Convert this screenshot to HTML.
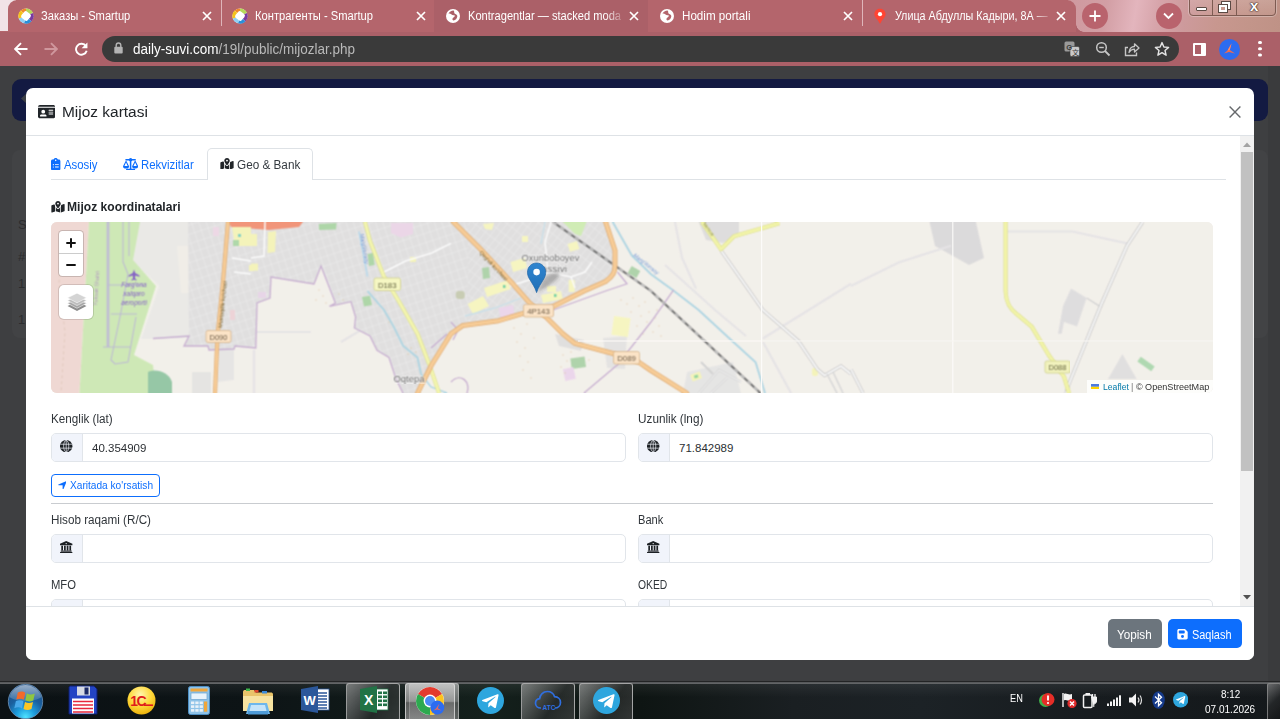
<!DOCTYPE html>
<html lang="uz">
<head>
<meta charset="utf-8">
<title>Mijoz kartasi</title>
<style>
*{box-sizing:border-box;margin:0;padding:0}
html,body{width:1280px;height:719px;overflow:hidden}
body{position:relative;background:#3e3f41;font-family:"Liberation Sans",sans-serif;color:#212529;font-size:13px}
.abs{position:absolute}
.lbl,#t_xar,#mtitle,.val,.btn span{transform-origin:0 50%}
/* ---------- browser chrome ---------- */
#chrome{position:absolute;left:0;top:0;width:1280px;height:66px;background:#ab6068}
#tabstrip{position:absolute;left:0;top:0;width:1280px;height:32px;background:#b4656c;overflow:hidden}
.tab{position:absolute;top:0;height:32px;background:#b5666e;border-radius:8px 8px 8px 8px;color:#fff;font-size:12px;line-height:32px;white-space:nowrap}
.tab .tt{position:absolute;left:33px;top:0}
.tab .x{position:absolute;top:9px;width:14px;height:14px}
.tabt{top:0;line-height:32px;font-size:12.5px;color:#fff;white-space:nowrap;transform-origin:0 50%}
.tabsep{position:absolute;top:0;width:1px;height:26px;background:#e6c9cc}
#toolbar{position:absolute;left:0;top:32px;width:1280px;height:34px;background:#ab6068}
#omni{position:absolute;left:102px;top:4px;width:1077px;height:26px;border-radius:13px;background:#3a3a3a}
#url{position:absolute;left:31px;top:0;line-height:26px;font-size:14px;color:#fff;white-space:nowrap;transform:scaleX(.964);transform-origin:0 50%}
#url span{color:#b9b9b9}
/* ---------- page ---------- */
#navy{position:absolute;left:12px;top:79px;width:1256px;height:42px;border-radius:9px;background:#131a42}
#modal{position:absolute;left:26px;top:88px;width:1228px;height:572px;background:#fff;border-radius:7px;overflow:hidden}
#mhead{position:absolute;left:0;top:0;width:100%;height:48px;border-bottom:1px solid #dee2e6}
#mtitle{position:absolute;left:36px;top:14px;transform:scaleX(.997);font-size:15.5px;color:#2b2f33;line-height:20px;color:#212529;white-space:nowrap}
#mfoot{position:absolute;left:0;top:518px;width:100%;height:54px;border-top:1px solid #dee2e6;background:#fff}
.btn{position:absolute;top:12px;height:29px;border-radius:5px;color:#fff;font-size:12.5px;line-height:29px;text-align:center;white-space:nowrap}
#mbody{position:absolute;left:0;top:48px;width:1214px;height:470px;overflow:hidden}
#sbar{position:absolute;left:1214px;top:48px;width:14px;height:470px;background:#f1f1f1}
#sthumb{position:absolute;left:1px;top:16px;width:12px;height:319px;background:#c1c1c1}
.lbl{position:absolute;font-size:12.5px;line-height:16px;color:#30353a;white-space:nowrap}
.ig{position:absolute;height:29px;border:1px solid #e1e5ea;border-radius:5px;background:#fff;overflow:hidden}
.ig .ad{position:absolute;left:0;top:0;width:31px;height:27px;background:#f1f4fb;border-right:1px solid #e1e5ea}
.ig .val{position:absolute;left:40px;top:0;line-height:28px;font-size:11.5px;color:#2b2f33;white-space:nowrap}
/* ---------- taskbar ---------- */
#taskbar{position:absolute;left:0;top:682px;width:1280px;height:37px;background:#0d1214;overflow:hidden}
</style>
</head>
<body>

<!-- ================= BROWSER CHROME ================= -->
<div id="chrome">
  <div id="tabstrip">
<div class="abs" style="left:0;top:0;width:16px;height:31px;background:#f1e3e7;border-radius:0 0 8px 0"></div>
<div class="abs" style="left:1068px;top:0;width:212px;height:32px;background:linear-gradient(100deg,#cf999f 0%,#d29ea4 18%,#e3b5bd 32%,#d7a5ab 42%,#cd9a9c 55%,#c8978f 70%,#c3958a 85%,#bf9286 100%)"></div>
<div class="abs" style="left:8px;top:0;width:428px;height:32px;background:#b4656c;border-radius:9px 0 0 0"></div>
<div class="abs" style="left:646px;top:0;width:430px;height:32px;background:#b4656c;border-radius:0 9px 0 0"></div>
<div class="abs" style="left:434px;top:0;width:214px;height:32px;background:#ab6068;border-radius:0"></div>
<div class="abs" style="left:1076px;top:24px;width:8px;height:8px;background:radial-gradient(circle at 100% 0,transparent 7.500px,#ab6068 8px)"></div>
<svg class="abs" style="left:18px;top:8px" width="16" height="16" viewBox="0 0 16 16"><circle cx="8" cy="8" r="7.600" fill="#fff"/><path d="M8 8 L2.600 2.600 A7.600 7.600 0 0 1 8 .4Z" fill="#ef8b2c"/><path d="M8 8 L8 .4 A7.600 7.600 0 0 1 15 5Z" fill="#b5d85a"/><path d="M8 8 L15 5 A7.600 7.600 0 0 1 13.400 13.400Z" fill="#7a3aa0"/><path d="M8 8 L13.400 13.400 A7.600 7.600 0 0 1 6 15.300Z" fill="#2a8fd8"/><path d="M8 8 L6 15.300 A7.600 7.600 0 0 1 .8 10.500Z" fill="#8fd0f5"/><path d="M8 8 L.8 10.500 A7.600 7.600 0 0 1 2.600 2.600Z" fill="#f5c21b"/><rect x="3.900" y="3.900" width="8.200" height="8.200" rx="2.200" fill="#fff" transform="rotate(40 8 8)"/></svg>
<div class="abs tabt" id="t_tab1" style="transform:scaleX(0.892);left:41.3px">Заказы - Smartup</div>
<svg class="abs" style="left:202px;top:11px" width="10" height="10" viewBox="0 0 10 10"><path d="M1 1L9 9M9 1L1 9" stroke="#fff" stroke-width="1.700" fill="none"/></svg>
<svg class="abs" style="left:231.5px;top:8px" width="16" height="16" viewBox="0 0 16 16"><circle cx="8" cy="8" r="7.600" fill="#fff"/><path d="M8 8 L2.600 2.600 A7.600 7.600 0 0 1 8 .4Z" fill="#ef8b2c"/><path d="M8 8 L8 .4 A7.600 7.600 0 0 1 15 5Z" fill="#b5d85a"/><path d="M8 8 L15 5 A7.600 7.600 0 0 1 13.400 13.400Z" fill="#7a3aa0"/><path d="M8 8 L13.400 13.400 A7.600 7.600 0 0 1 6 15.300Z" fill="#2a8fd8"/><path d="M8 8 L6 15.300 A7.600 7.600 0 0 1 .8 10.500Z" fill="#8fd0f5"/><path d="M8 8 L.8 10.500 A7.600 7.600 0 0 1 2.600 2.600Z" fill="#f5c21b"/><rect x="3.900" y="3.900" width="8.200" height="8.200" rx="2.200" fill="#fff" transform="rotate(40 8 8)"/></svg>
<div class="abs tabt" id="t_tab2" style="transform:scaleX(0.894);left:254.8px">Контрагенты - Smartup</div>
<svg class="abs" style="left:415.5px;top:11px" width="10" height="10" viewBox="0 0 10 10"><path d="M1 1L9 9M9 1L1 9" stroke="#fff" stroke-width="1.700" fill="none"/></svg>
<svg class="abs" style="left:445px;top:8px" width="16" height="16" viewBox="0 0 16 16"><circle cx="8" cy="8" r="7" fill="#fff"/><path fill="#ab6068" d="M8.600 2.400 C6.400 2.600 4.200 3.800 3.400 5.800 C4.400 5.400 5.400 5.600 6.200 6.300 C7 7 8 7.300 9 7.200 C9.600 7.200 10 7.800 9.600 8.400 C9 9.300 7.800 9.600 7.400 10.800 C7.200 11.600 7.800 12.400 8.600 12.400 C10.400 12.200 12 10.400 12.300 8.400 C12.400 7.600 11.800 7 11.200 6.600 C10.200 6 9.400 5.600 9.200 4.600 C9.100 3.800 9.400 3 8.600 2.400 Z"/></svg>
<div class="abs tabt" id="t_tab3" style="transform:scaleX(0.888);left:468.3px">Kontragentlar — stacked moda</div>
<svg class="abs" style="left:629px;top:11px" width="10" height="10" viewBox="0 0 10 10"><path d="M1 1L9 9M9 1L1 9" stroke="#fff" stroke-width="1.700" fill="none"/></svg>
<svg class="abs" style="left:658.5px;top:8px" width="16" height="16" viewBox="0 0 16 16"><circle cx="8" cy="8" r="7" fill="#fff"/><path fill="#b4656c" d="M8.600 2.400 C6.400 2.600 4.200 3.800 3.400 5.800 C4.400 5.400 5.400 5.600 6.200 6.300 C7 7 8 7.300 9 7.200 C9.600 7.200 10 7.800 9.600 8.400 C9 9.300 7.800 9.600 7.400 10.800 C7.200 11.600 7.800 12.400 8.600 12.400 C10.400 12.200 12 10.400 12.300 8.400 C12.400 7.600 11.800 7 11.200 6.600 C10.200 6 9.400 5.600 9.200 4.600 C9.100 3.800 9.400 3 8.600 2.400 Z"/></svg>
<div class="abs tabt" id="t_tab4" style="transform:scaleX(0.930);left:681.8px">Hodim portali</div>
<svg class="abs" style="left:842.5px;top:11px" width="10" height="10" viewBox="0 0 10 10"><path d="M1 1L9 9M9 1L1 9" stroke="#fff" stroke-width="1.700" fill="none"/></svg>
<svg class="abs" style="left:872px;top:8px" width="16" height="16" viewBox="0 0 16 16"><path fill="#f43" d="M8 .8 C4.600 .8 2.400 3.300 2.400 6.200 C2.400 9.400 6 11 7.400 15.200 H8.600 C10 11 13.600 9.400 13.600 6.200 C13.600 3.300 11.400 .8 8 .8Z"/><circle cx="8" cy="6.200" r="2.100" fill="#fff"/></svg>
<div class="abs tabt" id="t_tab5" style="transform:scaleX(0.862);left:895.3px">Улица Абдуллы Кадыри, 8А —</div>
<svg class="abs" style="left:1056px;top:11px" width="10" height="10" viewBox="0 0 10 10"><path d="M1 1L9 9M9 1L1 9" stroke="#fff" stroke-width="1.700" fill="none"/></svg>
<div class="abs" style="left:221px;top:0;width:1px;height:26px;background:#dfb5ba"></div>
<div class="abs" style="left:862px;top:0;width:1px;height:26px;background:#dfb5ba"></div>
<div class="abs" style="left:605px;top:6px;width:22px;height:20px;background:linear-gradient(90deg,rgba(171,96,104,0),#ab6068)"></div>
<div class="abs" style="left:1034px;top:6px;width:20px;height:20px;background:linear-gradient(90deg,rgba(180,101,108,0),#b4656c)"></div>
<div class="abs" style="left:1082px;top:3px;width:26px;height:26px;border-radius:13px;background:#b9636d"></div>
<svg class="abs" style="left:1089px;top:10px" width="12" height="12" viewBox="0 0 12 12"><path d="M6 0.500V11.500M0.500 6H11.500" stroke="#fff" stroke-width="1.800"/></svg>
<div class="abs" style="left:1155.500px;top:3px;width:26px;height:26px;border-radius:13px;background:#b9636d"></div>
<svg class="abs" style="left:1163px;top:12px" width="11" height="8" viewBox="0 0 11 8"><path d="M1 1.500L5.500 6L10 1.500" stroke="#fff" stroke-width="1.800" fill="none"/></svg>
<div class="abs" style="left:1189px;top:-4px;width:87px;height:20px;border:1px solid #7d5b52;border-radius:4px;background:linear-gradient(180deg,rgba(255,255,255,.16),rgba(255,255,255,.04));box-shadow:0 0 0 1px rgba(255,255,255,.28)"></div>
<div class="abs" style="left:1212px;top:0;width:1px;height:15px;background:#7d5b52"></div>
<div class="abs" style="left:1236px;top:0;width:1px;height:15px;background:#7d5b52"></div>
<div class="abs" style="left:1196px;top:7px;width:11px;height:4px;background:#fff;border:1px solid #5b4a44;border-radius:1px"></div>
<div class="abs" style="left:1222px;top:2px;width:8px;height:7px;border:2px solid #fff;outline:1px solid #5b4a44"></div><div class="abs" style="left:1219px;top:5px;width:8px;height:7px;border:2px solid #fff;outline:1px solid #5b4a44;background:#c9998f"></div>
<div class="abs" id="wclose" style="left:1250px;top:-3px;font:bold 15px/18px 'Liberation Sans',sans-serif;color:#fff;text-shadow:0 0 1px #3b2a25,0 0 1px #3b2a25,0 0 2px #3b2a25">x</div>
  </div>
  <div id="toolbar">
    <div id="omni"><svg class="abs" style="left:11.500px;top:6.200px" width="9" height="12" viewBox="0 0 9 12"><path d="M2.200 5V3.300a2.300 2.300 0 0 1 4.600 0V5" stroke="#b4b4b4" stroke-width="1.400" fill="none"/><rect x="0.300" y="4.800" width="8.400" height="6.700" rx="1" fill="#b4b4b4"/></svg><div id="url">daily-suvi.com<span>/19l/public/mijozlar.php</span></div><svg class="abs" style="left:962.0px;top:5px" width="16" height="16" viewBox="0 0 16 16"><rect x="0.500" y="0.500" width="10" height="10" rx="1.500" fill="#9a9a9a"/><rect x="6" y="5.500" width="9.500" height="10" rx="1.500" fill="#c9c9c9" stroke="#3a3a3a" stroke-width=".6"/><text x="2.200" y="8.600" font-family="Liberation Sans,sans-serif" font-size="7.500" font-weight="bold" fill="#3a3a3a">G</text><text x="8" y="13.800" font-family="Liberation Sans,Noto Sans CJK SC,sans-serif" font-size="7" fill="#3a3a3a">文</text></svg><svg class="abs" style="left:992.5px;top:5px" width="16" height="16" viewBox="0 0 16 16"><circle cx="6.500" cy="6.500" r="4.800" stroke="#c6c6c6" stroke-width="1.500" fill="none"/><path d="M10 10L14.500 14.500" stroke="#c6c6c6" stroke-width="1.800"/><path d="M4.200 6.500H8.800" stroke="#c6c6c6" stroke-width="1.400"/></svg><svg class="abs" style="left:1022.0px;top:5px" width="16" height="16" viewBox="0 0 16 16"><path d="M4 6.500H1.500V14.500H12.500V11.500" stroke="#c6c6c6" stroke-width="1.400" fill="none"/><path d="M5 11.500C5.500 7.500 8 5.500 10.500 5.500V2.800L15 7L10.500 11V8.200C8.500 8.200 6.500 9 5 11.500Z" stroke="#c6c6c6" stroke-width="1.300" fill="none" stroke-linejoin="round"/></svg><svg class="abs" style="left:1052.0px;top:4.500px" width="16" height="16" viewBox="0 0 16 16"><path d="M8 1.600L9.900 6L14.600 6.400L11 9.500L12.100 14.200L8 11.700L3.900 14.200L5 9.500L1.400 6.400L6.100 6Z" stroke="#e4e4e4" stroke-width="1.400" fill="none" stroke-linejoin="round"/></svg></div>
<svg class="abs" style="left:13.6px;top:9.700px" width="14" height="14" viewBox="0 0 14 14"><path d="M13.500 7H1.500M7 1.200L1.200 7L7 12.800" stroke="#fff" stroke-width="1.900" fill="none"/></svg>
<svg class="abs" style="left:43.5px;top:9.700px" width="14" height="14" viewBox="0 0 14 14"><path transform="translate(14 0) scale(-1 1)" d="M13.500 7H1.500M7 1.200L1.200 7L7 12.800" stroke="#cf979d" stroke-width="1.900" fill="none"/></svg>
<svg class="abs" style="left:73.500px;top:9.500px" width="14.500" height="14.500" viewBox="0 0 16 16"><path d="M13.200 4.600 A6 6 0 1 0 14 9.600" stroke="#fff" stroke-width="2.100" fill="none"/><path d="M14.800 0.600V7H8.400Z" fill="#fff"/></svg>
  <div class="abs" style="left:1193px;top:10.500px;width:13px;height:13px;border:2px solid #fff;border-radius:1px"><div class="abs" style="right:0;top:0;width:3.500px;height:9px;background:#fff"></div></div>
<div class="abs" style="left:1219px;top:7px;width:21px;height:21px;border-radius:11px;background:#2d6cf0"></div>
<svg class="abs" style="left:1222px;top:10px" width="15" height="15" viewBox="0 0 15 15"><path d="M9.500 1.500L7.800 8L13 11.500L7 10L2 11.500L5.500 8.500Z" fill="#f26b4e"/><path d="M9.500 1.500L7.800 8L5.500 8.500Z" fill="#ff8a6b"/></svg>
<div class="abs" style="left:1258.300px;top:8.500px;width:3.400px;height:3.400px;border-radius:2px;background:#fff;box-shadow:0 6.300px 0 #fff,0 12.600px 0 #fff"></div>
  </div>
</div>

<!-- ================= PAGE ================= -->
<div class="abs" style="left:12px;top:150px;width:1256px;height:188px;border-radius:8px;background:#424345"></div>
<div class="abs" style="left:1268px;top:66px;width:12px;height:616px;background:#3a3b3d"></div>
<div id="navy"></div>
<svg class="abs" style="left:20px;top:93px" width="7" height="11" viewBox="0 0 7 11"><path d="M7 0L1 5.500L7 11Z" fill="#3c3f45"/></svg>
<div class="abs" style="left:18px;top:217px;font-size:13px;line-height:16px;color:#2c2d2f">S<br><br>#<br><span style="display:block;height:11px"></span>1<br><span style="display:block;height:20px"></span>1</div>
<div id="modal">
  <div id="mhead"><svg class="abs" style="left:12.299999999999997px;top:15.599999999999994px" width="17.2" height="15.3" viewBox="0 0 576 512"><path fill="#212529" fill-rule="evenodd" d="M0 96h576c0-35.300-28.700-64-64-64H64C28.700 32 0 60.700 0 96zm0 32v288c0 35.300 28.700 64 64 64h448c35.300 0 64-28.700 64-64V128H0zM64 405.300c0-29.500 23.900-53.300 53.300-53.300h117.300c29.500 0 53.300 23.900 53.300 53.300 0 5.900-4.800 10.700-10.700 10.700H74.700c-5.900 0-10.700-4.800-10.700-10.700zM176 192a64 64 0 1 1 0 128 64 64 0 1 1 0-128zm176 16c0-8.800 7.200-16 16-16h128c8.800 0 16 7.200 16 16s-7.200 16-16 16H368c-8.800 0-16-7.200-16-16zm0 64c0-8.800 7.200-16 16-16h128c8.800 0 16 7.200 16 16s-7.200 16-16 16H368c-8.800 0-16-7.200-16-16zm0 64c0-8.800 7.200-16 16-16h128c8.800 0 16 7.200 16 16s-7.200 16-16 16H368c-8.800 0-16-7.200-16-16z"/></svg><div id="mtitle">Mijoz kartasi</div><svg class="abs" style="left:1203.400px;top:17.600px" width="12" height="12" viewBox="0 0 12 12"><path d="M.6 .6L11.400 11.400M11.400 .6L.6 11.400" stroke="#66696c" stroke-width="1.400" fill="none"/></svg></div>
  <div id="mbody">
    <!-- tabs -->
    <div class="abs" style="left:25px;top:43px;width:1175px;height:1px;background:#dee2e6"></div>
    <div class="abs" style="left:181px;top:12px;width:106px;height:32px;border:1px solid #dee2e6;border-bottom:none;border-radius:5px 5px 0 0;background:#fff"></div>
<svg class="abs" style="left:25.299999999999997px;top:21.5px" width="9.4" height="12.5" viewBox="0 0 384 512"><path fill="#0d6efd" fill-rule="evenodd" d="M192 0c-41.800 0-77.400 26.700-90.500 64H64C28.700 64 0 92.700 0 128v320c0 35.300 28.700 64 64 64h256c35.300 0 64-28.700 64-64V128c0-35.300-28.700-64-64-64h-37.500C269.400 26.700 233.800 0 192 0zm0 64a32 32 0 1 1 0 64 32 32 0 1 1 0-64zM72 272a24 24 0 1 1 48 0 24 24 0 1 1-48 0zm104-16h128c8.800 0 16 7.200 16 16s-7.200 16-16 16H176c-8.800 0-16-7.200-16-16s7.200-16 16-16zM72 368a24 24 0 1 1 48 0 24 24 0 1 1-48 0zm88 0c0-8.800 7.200-16 16-16h128c8.800 0 16 7.200 16 16s-7.200 16-16 16H176c-8.800 0-16-7.200-16-16z"/></svg>
<svg class="abs" style="left:97px;top:21.69999999999999px" width="15.2" height="12.3" viewBox="0 0 640 512"><g fill="#0d6efd"><rect x="96" y="40" width="448" height="64" rx="30"/><circle cx="320" cy="72" r="72"/><rect x="288" y="72" width="64" height="400"/><rect x="128" y="448" width="384" height="64" rx="30"/><path fill-rule="evenodd" d="M128 90 L0 340 a128 100 0 0 0 256 0 Z M128 190 L60 330 H196 Z"/><path fill-rule="evenodd" d="M512 90 L384 340 a128 100 0 0 0 256 0 Z M512 190 L444 330 H580 Z"/></g></svg>
<svg class="abs" style="left:194px;top:21.69999999999999px" width="14" height="11.8" viewBox="0 0 576 512"><path fill="#212529" fill-rule="evenodd" d="M408 120c0 54.600-73.100 151.900-105.200 192-7.700 9.600-22 9.600-29.600 0C241.100 271.900 168 174.600 168 120 168 53.700 221.700 0 288 0s120 53.700 120 120zm8 80.400c3.500-6.900 6.700-13.800 9.600-20.600.5-1.200 1-2.500 1.500-3.700l116-46.400C558.900 123.400 576 135 576 152v270.800c0 9.800-6 18.600-15.100 22.300L416 503V200.400zM137.600 138.300c2.400 14.100 7.200 28.300 12.800 41.500 2.900 6.800 6.100 13.700 9.600 20.600v251.400L32.900 502.700C17.100 509 0 497.400 0 480.400V209.600c0-9.800 6-18.600 15.100-22.300l122.600-49zM327.800 332c13.900-17.400 35.700-45.700 56.200-77v249.300L192 449.400V255c20.500 31.300 42.300 59.600 56.200 77 20.500 25.600 59.100 25.600 79.600 0zM288 152a40 40 0 1 0 0-80 40 40 0 1 0 0 80z"/></svg>
<svg class="abs" style="left:24.6px;top:64.80000000000001px" width="14" height="11.8" viewBox="0 0 576 512"><path fill="#212529" fill-rule="evenodd" d="M408 120c0 54.600-73.100 151.900-105.200 192-7.700 9.600-22 9.600-29.600 0C241.100 271.900 168 174.600 168 120 168 53.700 221.700 0 288 0s120 53.700 120 120zm8 80.400c3.500-6.900 6.700-13.800 9.600-20.600.5-1.200 1-2.500 1.500-3.700l116-46.400C558.900 123.400 576 135 576 152v270.800c0 9.800-6 18.600-15.100 22.300L416 503V200.400zM137.600 138.300c2.400 14.100 7.200 28.300 12.800 41.500 2.900 6.800 6.100 13.700 9.600 20.600v251.400L32.900 502.700C17.100 509 0 497.400 0 480.400V209.600c0-9.800 6-18.600 15.100-22.300l122.600-49zM327.800 332c13.900-17.400 35.700-45.700 56.200-77v249.300L192 449.400V255c20.500 31.300 42.300 59.600 56.200 77 20.500 25.600 59.100 25.600 79.600 0zM288 152a40 40 0 1 0 0-80 40 40 0 1 0 0 80z"/></svg>
    <div class="lbl t13" id="t_asosiy" style="transform:scaleX(0.910);left:38px;top:21px;color:#0d6efd">Asosiy</div>
    <div class="lbl t13" id="t_rekv" style="transform:scaleX(0.914);left:115px;top:21px;color:#0d6efd">Rekvizitlar</div>
    <div class="lbl t13" id="t_geo" style="transform:scaleX(0.939);left:211px;top:21px;color:#343a40">Geo &amp; Bank</div>
    <div class="lbl" id="t_coord" style="transform:scaleX(0.967);left:41px;top:63px;font-weight:bold;color:#212529">Mijoz koordinatalari</div>

    <!-- map -->
    <div id="map" class="abs" style="left:25px;top:86px;width:1162px;height:171px;border-radius:6px;background:#f2efe9;overflow:hidden">
<svg class="abs" style="left:0;top:0" width="1162" height="171" viewBox="0 0 1162 171">
<defs>
<filter id="mb" x="0" y="0" width="100%" height="100%" color-interpolation-filters="sRGB"><feConvolveMatrix order="3" kernelMatrix="1 2 1 2 4 2 1 2 1" divisor="16" edgeMode="duplicate" preserveAlpha="false"/></filter>
<filter id="mb2" x="-5%" y="-20%" width="110%" height="140%"><feGaussianBlur stdDeviation="0.55"/></filter><filter id="mb3" x="0" y="0" width="100%" height="100%" color-interpolation-filters="sRGB"><feConvolveMatrix order="3" kernelMatrix="1 2 1 2 4 2 1 2 1" divisor="16" edgeMode="duplicate" preserveAlpha="false"/></filter>
<pattern id="st1" width="7" height="9" patternUnits="userSpaceOnUse" patternTransform="rotate(-18)"><path d="M0 .5H7M.5 0V9" stroke="#fff" stroke-opacity=".3" stroke-width=".7"/></pattern>
<pattern id="st2" width="6" height="10" patternUnits="userSpaceOnUse" patternTransform="rotate(38)"><path d="M0 .5H6M.5 0V10" stroke="#fff" stroke-opacity=".28" stroke-width=".7"/></pattern>
<clipPath id="cgrey"><path d="M137 0H554.600L564 28.500V47.600L554.600 59.500L533 69L500 85.600L471.300 91.600L447.600 98.700L412 103.400L400 111.800L380.700 142.700L366.500 171H352L345 157L338 135.500L326 128.400L319 114L303.400 106L304.600 95L300 79.700L278.500 84.400L284.400 81L270 44L263 62L220 55L219 76L206 81L204.800 126L184 124L183 127L158 128L157 124L133 124L138 114Z"/></clipPath>
</defs>
<rect width="1162" height="171" fill="#f2efe9"/>
<g filter="url(#mb)">
<!-- light grey zone next to the airport -->
<path d="M80 0H140V116L100 117L90 117L108 64L80 38Z" fill="#e9e8e5"/>
<path d="M126 24H140V71H130Z" fill="#efece6"/>
<!-- main residential grey -->
<path d="M137 0H554.600L564 28.500V47.600L554.600 59.500L533 69L500 85.600L471.300 91.600L447.600 98.700L412 103.400L400 111.800L380.700 142.700L366.500 171H352L345 157L338 135.500L326 128.400L319 114L303.400 106L304.600 95L300 79.700L278.500 84.400L284.400 81L270 44L263 62L220 55L219 76L206 81L204.800 126L184 124L183 127L158 128L157 124L133 124L138 114Z" fill="#dedddd"/>
<path d="M168 127H183V158L167 160Z" fill="#e5e4e2"/>
<g clip-path="url(#cgrey)"><rect x="137" y="0" width="280" height="171" fill="url(#st1)"/><rect x="417" y="0" width="150" height="120" fill="url(#st2)"/></g>
<!-- small grey blocks outside -->
<path d="M504 112L533 118L530 129L508 124Z" fill="#dedddc"/>
<path d="M552 116L576 114L574 147L556 146Z" fill="#e2e1e0"/>
<path d="M647.600 0H688V14L672 21L655 18Z" fill="#dcdbdb"/>
<path d="M636 150L682 140L690 171H632Z" fill="#e4e3e2"/>
<path d="M878.500 0H925L933 36L918 43L884 24Z" fill="#d9d8d9"/>
<path d="M1020 66.600L1035.700 76L1026 104.600L1013 100L1010.700 111.800L1007 111.800L1012 84Z" fill="#dcdbdc"/>
<path d="M1071.400 132L1085.700 157H1057Z" fill="#dedddd"/>
<path d="M141 150H160V171H141Z" fill="#e3e2e0"/>
<!-- airport -->
<path d="M0 0H38L28.500 171H0Z" fill="#eed6d0"/>
<path d="M38 0H89L82 38L105 64L83 133L102 143L105 171H28.500Z" fill="#cbe7b1"/>
<path d="M97 150C105 146 118 150 121 160V171H97Z" fill="#8fc3a0"/>
<path d="M57 0V125" stroke="#bbb8d0" stroke-width="2.800" fill="none"/>
<path d="M72 0V40L77 52L70 90L60 138L64 142L77 140L85 95M52 125H80M57 63H92M60 92H86M78 0V34" stroke="#b8b5d0" stroke-width="1.100" fill="none"/>
<path d="M13 10L8 60L14 110L10 171" stroke="#dcc0b4" stroke-width=".8" stroke-dasharray="3 3" fill="none"/>
<!-- salmon / yellow / green / pink patches -->
<path d="M178 0H252L248 5L218 8L180 5Z" fill="#f08d70"/>
<path d="M181 5H200V24H184Z" fill="#f4f3b5"/><rect x="187" y="12" width="3" height="3" fill="#7ecfc0"/>
<rect x="200" y="12" width="6" height="12" fill="#f4f3b5"/><path d="M217 10L225 9L224 30L216.600 31Z" fill="#f4f3b5"/><rect x="200" y="41.600" width="7" height="7" fill="#f4f3b5"/>
<rect x="198" y="43" width="5" height="6" fill="#f4f3b5"/>
<rect x="162" y="5" width="6" height="9" fill="#ecd6e4"/><rect x="179" y="88" width="5" height="10" fill="#ecd0d4"/><rect x="207" y="70" width="8" height="6" fill="#e6d2e6"/>
<rect x="182" y="18" width="6" height="6" fill="#a9d6a4"/>
<path d="M267.800 2L285.600 1L285 7.500L268 8Z" fill="#a8d3a2"/><path d="M316.500 32L322 31L323.700 43L318 44Z" fill="#a8d3a2"/><path d="M311 75L319 73.700L321 83L313 84.400Z" fill="#a8d3a2"/>
<path d="M340 1H362V12L350 15.500L340 11Z" fill="#ead3e6"/><rect x="359" y="35" width="6" height="5" fill="#f4f3b5"/>
<path d="M433 66L457 58L459.500 67L436 75Z" fill="#f6f5bd"/><path d="M416.600 82L432 74L438 84L422 92Z" fill="#f6f5bd"/><path d="M459.500 40L474 35.700L476 46L462 50Z" fill="#f6f5bd"/><path d="M490 73L510 69L511.800 77L492 81Z" fill="#f6f5bd"/><path d="M516.500 22L526 19L528.400 27L519 29.700Z" fill="#f6f5bd"/><rect x="561.700" y="95" width="16.700" height="19" fill="#f6f5bd" transform="rotate(8 570 104)"/><rect x="471" y="14" width="6" height="6" fill="#f6f5bd"/><path d="M432 2L443 1L441 8L434 7Z" fill="#f6f5bd"/><rect x="517.700" y="58" width="6" height="12" fill="#f6f5bd"/><rect x="496" y="64" width="9" height="6" fill="#f6f5bd"/>
<rect x="452" y="63" width="2.500" height="3" fill="#6fcf9f"/><rect x="503" y="72" width="2.500" height="3" fill="#6fcf9f"/>
<path d="M431 46L438 45L439 56L432 57Z" fill="#a9d0a5"/><rect x="520" y="135.500" width="14.400" height="10.500" fill="#a9d0a5" transform="rotate(-8 527 141)"/><rect x="404.800" y="69" width="9" height="8" rx="3" fill="#c4c9ae"/><rect x="578" y="46" width="10" height="8" fill="#a9d0a5" transform="rotate(30 583 50)"/>
<path d="M447.600 86L462 83L464 94L450 97.500Z" fill="#ead3ea"/><rect x="513" y="146" width="10.700" height="12" fill="#ead3ea" transform="rotate(-12 518 152)"/>
<path d="M511.800 0H535.500L530 14L524 12Z" fill="#cdebb0"/>
<rect x="640" y="151" width="10" height="7" fill="#f4f3b5" transform="rotate(-20 645 154)"/><rect x="643" y="153" width="4" height="3" fill="#8fd39a" transform="rotate(-20 645 154)"/><rect x="761" y="146" width="6" height="8" rx="2" fill="#f4f3b5"/>
<rect x="1086.500" y="139" width="17" height="6" fill="#a9d6ac" transform="rotate(35 1095 142)"/>
<!-- orchard dots -->
<g fill="#dcc59a" fill-opacity=".8"><circle cx="268" cy="68" r=".7"/><circle cx="272" cy="74" r=".7"/><circle cx="265" cy="78" r=".7"/><circle cx="275" cy="81" r=".7"/><circle cx="288" cy="72" r=".7"/><circle cx="292" cy="78" r=".7"/><circle cx="338" cy="100" r=".7"/><circle cx="360" cy="126" r=".7"/><circle cx="365" cy="130" r=".7"/><circle cx="357" cy="132" r=".7"/>
<circle cx="463" cy="106" r=".7"/><circle cx="470" cy="112" r=".7"/><circle cx="466" cy="120" r=".7"/><circle cx="474" cy="126" r=".7"/><circle cx="469" cy="134" r=".7"/><circle cx="477" cy="140" r=".7"/><circle cx="472" cy="148" r=".7"/><circle cx="480" cy="156" r=".7"/><circle cx="476" cy="102" r=".7"/><circle cx="483" cy="116" r=".7"/>
<circle cx="512" cy="133" r=".7"/><circle cx="516" cy="139" r=".7"/><circle cx="510" cy="145" r=".7"/><circle cx="514" cy="151" r=".7"/><circle cx="520" cy="130" r=".7"/><circle cx="538" cy="138" r=".7"/>
<circle cx="570" cy="78" r=".7"/><circle cx="576" cy="82" r=".7"/><circle cx="582" cy="76" r=".7"/><circle cx="588" cy="84" r=".7"/><circle cx="594" cy="80" r=".7"/><circle cx="580" cy="90" r=".7"/><circle cx="590" cy="94" r=".7"/><circle cx="596" cy="100" r=".7"/><circle cx="586" cy="104" r=".7"/><circle cx="592" cy="112" r=".7"/><circle cx="598" cy="90" r=".7"/><circle cx="604" cy="96" r=".7"/><circle cx="608" cy="104" r=".7"/><circle cx="602" cy="110" r=".7"/><circle cx="610" cy="114" r=".7"/><circle cx="606" cy="88" r=".7"/></g>
<!-- faint tracks -->
<g fill="none" stroke="#e3e1e3" stroke-width="2.200"><path d="M624 0L631 35.700L645 66.600"/><path d="M614 43L643 69L664 88L695 114"/><path d="M800 61.800L711.800 116.500"/><path d="M900 23.800L847.600 40.400L800 64"/><path d="M954.600 9.500L1021.500 9.500L1076 21.400"/><path d="M203 128V171"/><path d="M205 110H260M290 120L310 108"/><path d="M712 120L740 171"/></g>
<!-- water -->
<g fill="none" stroke="#a9d2e0" stroke-width="1.900"><path d="M308 9.500L312 30L316.500 54.700" stroke="#b8d8ea"/><path d="M316.500 69L333 88L342.700 104.600L352 123.700L366.500 135.500L370 152"/><path d="M561.700 0L580.700 33.300L600 52.300L621.400 67.800L647.600 88L678.500 116.500L704.600 140.300L714 171"/><path d="M370 152L380 165L396 171" stroke-width="1.400"/><path d="M414 94L444 86L470 76" stroke="#c4dde8" stroke-width="1.300"/><path d="M494 0L490 22" stroke="#c4dde8" stroke-width="1.300"/></g>
<!-- boundary / power lines (purple) -->
<g fill="none" stroke="#c3a9cd" stroke-width="1.300"><path d="M102 116.500L138 114L133 124L157 124L158 128L183 127L184 124L204.800 126L206 81L219 76L220 55L263 62L270 44L284.400 81L278.500 84.400L300 79.700L304.600 95L303.400 106L319 114L326 128.400L338 135.500L345 157L352 171"/><path d="M502 88L554.600 69L576 61.800L566.500 50"/><path d="M622.600 67.800L600 100L566.500 142.700L533 171"/><path d="M400 100L407 108L402 118"/><path d="M400 160C410 150 420 160 416 171"/><path d="M380 126L396 112"/></g>
<!-- white minor roads -->
<g fill="none" stroke="#fbfbfb" stroke-width="1.500"><path d="M400 21.400L380.700 31L354.600 39L333 50"/><path d="M214 0L213 34L200 36"/><path d="M181 36L200 39M183 50L200 52"/><path d="M459 64L478 58L497 50L520 55L534 50L541 40"/><path d="M520 55L524 66"/><path d="M500 0L494 20L497 50"/></g>
<!-- railway -->
<path d="M502 0L600 69L709.400 171" stroke="#666" stroke-width="2.100" fill="none"/>
<path d="M502 0L600 69L709.400 171" stroke="#dcdcdc" stroke-width="1.100" stroke-dasharray="4.500 4.500" fill="none"/>
<!-- grey-cased white roads -->
<g fill="none"><path d="M670 28.500L711.800 88L747.400 119L766.500 147.400L773.600 153.400L790 144L800 152" stroke="#c4c4c4" stroke-width="3.400"/><path d="M670 28.500L711.800 88L747.400 119L766.500 147.400L773.600 153.400L790 144L800 152" stroke="#fafafa" stroke-width="1.700"/>
<path d="M1091.600 0L1076 23.800L1050 83L1018 161.700L1015 171" stroke="#c4c4c4" stroke-width="3.400"/><path d="M1091.600 0L1076 23.800L1050 83L1018 161.700L1015 171" stroke="#fafafa" stroke-width="1.700"/>
<path d="M800 147.400L812 171" stroke="#c4c4c4" stroke-width="3.200"/><path d="M800 147.400L812 171" stroke="#fafafa" stroke-width="1.600"/>
<path d="M1035.700 76L1048.800 84.400" stroke="#cfcfcf" stroke-width="1.300"/>
<path d="M648 171L668 148L690 160M660 171L676 156M650 140L662 152" stroke="#d0d0d0" stroke-width="2.200"/><path d="M648 171L668 148L690 160M660 171L676 156" stroke="#f6f6f6" stroke-width="1"/>
<path d="M776 152L786 171M782 150L792 171" stroke="#d4d4d4" stroke-width="1.600"/>
</g>
<!-- yellow roads -->
<g fill="none" stroke-linejoin="round"><path d="M314 0L319 19L333 54.700L347.400 78.500L366.500 111.800L378.400 142.700L388 171" stroke="#d9dc84" stroke-width="4"/><path d="M314 0L319 19L333 54.700L347.400 78.500L366.500 111.800L378.400 142.700L388 171" stroke="#f3f5a9" stroke-width="2.800"/>
<path d="M651 0L670 27.300L683 14.300L728.400 1.200" stroke="#d9dc84" stroke-width="4.200"/><path d="M651 0L670 27.300L683 14.300L728.400 1.200" stroke="#f0f3a2" stroke-width="3"/>
<path d="M954.600 0V69C955 82 960 88 966.500 92.700L980.700 104.600L997.700 133L1013 154.600L1018 171" stroke="#d9dc84" stroke-width="4.200"/><path d="M954.600 0V69C955 82 960 88 966.500 92.700L980.700 104.600L997.700 133L1013 154.600L1018 171" stroke="#f0f3a2" stroke-width="3"/></g>
<!-- orange roads -->
<g fill="none" stroke-linejoin="round" stroke-linecap="round"><path d="M177 0L172 60L166.500 114L164 171" stroke="#dca66a" stroke-width="4.200"/><path d="M177 0L172 60L166.500 114L164 171" stroke="#f6c88e" stroke-width="2.800"/>
<path d="M366.500 171L380.700 142.700L400 111.800L412 103.400L447.600 98.700L471.300 91.600L500 85.600L533 69L554.600 59.500C562 54 564 50 564 44V28.500L554.600 0" stroke="#dca66a" stroke-width="5"/>
<path d="M402.400 0L428.500 26L461.800 61.800L478.500 80.900L495 95L511.800 111.800L523.700 121.300L564 132L587.900 140.300L600 148.600L635.700 171" stroke="#dca66a" stroke-width="5"/>
<path d="M366.500 171L380.700 142.700L400 111.800L412 103.400L447.600 98.700L471.300 91.600L500 85.600L533 69L554.600 59.500C562 54 564 50 564 44V28.500L554.600 0" stroke="#f6c88e" stroke-width="3.500"/>
<path d="M402.400 0L428.500 26L461.800 61.800L478.500 80.900L495 95L511.800 111.800L523.700 121.300L564 132L587.900 140.300L600 148.600L635.700 171" stroke="#f6c88e" stroke-width="3.500"/>
</g>
<!-- tile seams -->
<rect width="1162" height="171" fill="#fff" fill-opacity=".07"/>
</g>
<g filter="url(#mb2)"><path d="M710.600 0V171M901.800 0V171" stroke="#fdfcfa" stroke-width="1.100"/><path d="M527 119H710.600" stroke="#fdfcfa" stroke-width="1.100"/><path d="M710.600 119H1162" stroke="#f8f6f2" stroke-width="1"/></g>
<!-- labels -->
<g filter="url(#mb3)" filterUnits="userSpaceOnUse" font-family="Liberation Sans, sans-serif">
<g font-size="6.500" font-style="italic" fill="#8461c4" text-anchor="middle"><text x="83" y="65">Farg'ona</text><text x="83" y="74">xalqaro</text><text x="83" y="83">aeroporti</text></g>
<path d="M83 47.500L84.200 51L88.500 53.500V54.700L84.200 53.600L84 56.500L85.500 57.600V58.400L83 57.800L80.500 58.400V57.600L82 56.500L81.800 53.600L77.500 54.700V53.500L81.800 51Z" fill="#8461c4"/>
<text x="46" y="84" font-size="5.500" fill="#b49ac0" transform="rotate(-86 46 84)">Yuksak Shahri</text>
<text x="171" y="106" font-size="5.500" fill="#7d6a3a" transform="rotate(-84 171 106)">Mustaqillik ko'chasi</text>
<text x="428" y="31" font-size="5.500" fill="#7d6a3a" transform="rotate(47 428 31)">Qirgʻuli koʻchasi</text>
<text x="309" y="12" font-size="5.500" fill="#6d94d6" font-style="italic" transform="rotate(80 309 12)">Marg'ilonsoy</text>
<text x="582" y="34" font-size="5.500" fill="#6d94d6" font-style="italic" transform="rotate(38 582 34)">Marg'ilonsoy</text>
<text x="652" y="2" font-size="4.500" fill="#8a8a55" transform="rotate(56 652 2)">Mehrob</text>
<rect x="155" y="108.500" width="25" height="12" rx="2" fill="#fbe3c6" stroke="#d6b48c" stroke-width=".8"/><text x="167.500" y="117.800" font-size="7.500" fill="#6b5a45" text-anchor="middle">D090</text>
<rect x="323" y="56" width="26.500" height="12.500" rx="2" fill="#f6f7c3" stroke="#cfd08a" stroke-width=".8"/><text x="336.200" y="65.500" font-size="7.800" fill="#5f5f3c" text-anchor="middle">D183</text>
<rect x="472.500" y="82.500" width="30" height="12.500" rx="2" fill="#fbe3c6" stroke="#d6b48c" stroke-width=".8"/><text x="487.500" y="92" font-size="7.800" fill="#6b5a45" text-anchor="middle">4P143</text>
<rect x="562.500" y="129.500" width="26" height="12.500" rx="2" fill="#fbe3c6" stroke="#d6b48c" stroke-width=".8"/><text x="575.500" y="139" font-size="7.800" fill="#6b5a45" text-anchor="middle">D089</text>
<rect x="994" y="139" width="25" height="12" rx="2" fill="#f1f2bd" stroke="#cfd08a" stroke-width=".8"/><text x="1006.500" y="148.200" font-size="7.500" fill="#66663f" text-anchor="middle">D088</text>
<g font-size="9.500" fill="#6a6a6a" stroke="#ffffff" stroke-opacity=".55" stroke-width="1.600" paint-order="stroke" text-anchor="middle"><text x="499.500" y="38.500" textLength="58" lengthAdjust="spacingAndGlyphs">Oxunboboyev</text><text x="499" y="50" textLength="34" lengthAdjust="spacingAndGlyphs">massivi</text><text x="358" y="159.500" font-size="9" textLength="31" lengthAdjust="spacingAndGlyphs">Oqtepa</text></g>
</g>
</svg>

<!-- marker shadow + marker (map-local coords; map origin at page 51,222) -->
<svg class="abs" style="left:470px;top:36px" width="50" height="40" viewBox="0 0 50 40"><defs><filter id="shb" x="-30%" y="-30%" width="160%" height="160%"><feGaussianBlur stdDeviation="1.600"/></filter><linearGradient id="mk" x1="0" y1="0" x2="0" y2="1"><stop offset="0" stop-color="#3085d0"/><stop offset="1" stop-color="#216fb6"/></linearGradient><filter id="mkb"><feGaussianBlur stdDeviation=".35"/></filter></defs>
<path d="M16 34L22 22C26 16 34 13 38 15C40 18 34 24 24 30Z" fill="#4a4a4a" fill-opacity=".34" filter="url(#shb)"/>
<path filter="url(#mkb)" d="M15.600 34.600C14 29 11 25.500 8.500 21C7 18.500 6.500 16.500 6.500 14.200C6.500 9 10.500 5 15.600 5C20.700 5 24.700 9 24.700 14.200C24.700 16.500 24.200 18.500 22.700 21C20.200 25.500 17.200 29 15.600 34.600Z" fill="url(#mk)" stroke="#1f66a8" stroke-width=".7"/>
<circle cx="15.600" cy="14.100" r="3.300" fill="#fff" filter="url(#mkb)"/></svg>
<!-- zoom control -->
<div class="abs" style="left:8.300px;top:9.300px;width:23.400px;height:44.800px;background:#fff;border-radius:3.500px;box-shadow:0 0 0 1px rgba(0,0,0,.16)"></div>
<div class="abs" style="left:8.300px;top:31.200px;width:23.400px;height:1px;background:#ccc"></div>
<svg class="abs" style="left:15px;top:15.600px" width="10" height="10" viewBox="0 0 10 10"><path d="M5 .3V9.700M.3 5H9.700" stroke="#111" stroke-width="2"/></svg>
<svg class="abs" style="left:15px;top:37.800px" width="10" height="10" viewBox="0 0 10 10"><path d="M.3 5H9.700" stroke="#111" stroke-width="2"/></svg>
<!-- layers control -->
<div class="abs" style="left:8.300px;top:63px;width:33.800px;height:33.600px;background:#fff;border-radius:5px;box-shadow:0 0 0 1px rgba(0,0,0,.12)"></div>
<svg class="abs" style="left:14.500px;top:70px" width="22" height="21" viewBox="0 0 22 21"><path d="M11 9.500L1.500 14L11 19L20.500 14Z" fill="#8d8d8d"/><path d="M11 6.800L1.500 11.300L11 16.300L20.500 11.300Z" fill="#a6a6a6" stroke="#fff" stroke-width=".5"/><path d="M11 4.100L1.500 8.600L11 13.600L20.500 8.600Z" fill="#bdbdbd" stroke="#fff" stroke-width=".5"/><path d="M11 1.200L1.500 5.800L11 10.800L20.500 5.800Z" fill="#d4d4d4" stroke="#fff" stroke-width=".5"/></svg>
<!-- attribution -->
<div class="abs" style="left:1035.900px;top:157.500px;width:127px;height:14px;background:rgba(255,255,255,.82)"></div>
<svg class="abs" style="left:1040px;top:161.500px" width="8.400" height="5.600" viewBox="0 0 12 8"><rect width="12" height="4" fill="#4c7be1"/><rect y="4" width="12" height="4" fill="#ffd500"/></svg>
<div class="abs" id="t_leaf" style="transform:scaleX(0.908);left:1051.500px;top:158px;font-size:9.500px;line-height:13px;color:#0078a8;white-space:nowrap;transform-origin:0 50%">Leaflet</div>
<div class="abs" id="t_osm" style="transform:scaleX(0.957);left:1079.500px;top:158px;font-size:9.500px;line-height:13px;color:#333;white-space:nowrap;transform-origin:0 50%"><span style="color:#777">|</span> © OpenStreetMap</div>

</div><!--/map-->

    <!-- coordinates -->
    <div class="lbl" id="t_lat" style="transform:scaleX(0.935);left:25px;top:275px">Kenglik (lat)</div>
    <div class="lbl" id="t_lng" style="transform:scaleX(0.941);left:612px;top:275px">Uzunlik (lng)</div>
    <div class="ig" style="left:25px;top:297px;width:575px"><div class="ad"><svg class="abs" style="left:8.2px;top:5.6px" width="12.4" height="12.4" viewBox="0 0 24 24"><circle cx="12" cy="12" r="12" fill="#1d2125"/><g fill="none" stroke="#f1f4fb" stroke-width="1.350"><ellipse cx="12" cy="12" rx="5" ry="11.200"/><path d="M12 0V24M0.500 8.200H23.500M0.500 15.800H23.500"/></g></svg></div><div class="val" id="t_v1">40.354909</div></div>
    <div class="ig" style="left:612px;top:297px;width:575px"><div class="ad"><svg class="abs" style="left:8.2px;top:5.6px" width="12.4" height="12.4" viewBox="0 0 24 24"><circle cx="12" cy="12" r="12" fill="#1d2125"/><g fill="none" stroke="#f1f4fb" stroke-width="1.350"><ellipse cx="12" cy="12" rx="5" ry="11.200"/><path d="M12 0V24M0.500 8.200H23.500M0.500 15.800H23.500"/></g></svg></div><div class="val" id="t_v2">71.842989</div></div>
    <div class="abs" id="btnmap" style="left:25px;top:338px;width:109px;height:23px;border:1px solid #0d6efd;border-radius:4px;color:#0d6efd;font-size:10.5px;line-height:21px;white-space:nowrap"><svg class="abs" style="left:5.7px;top:5.5px" width="8.6" height="8.6" viewBox="0 0 448 448"><path fill="#0d6efd" d="M429 6 C443 0 454 10 447 25 L285 425 C275 450 240 443 240 416 V224 H32 C5 224 -2 189 23 179 Z"/></svg><span class="abs" id="t_xar" style="transform:scaleX(0.965);left:18px;top:0">Xaritada ko'rsatish</span></div>
    <div class="abs" style="left:25px;top:367px;width:1162px;height:1px;background:#c9ccd0"></div>

    <!-- bank -->
    <div class="lbl" id="t_hisob" style="transform:scaleX(0.935);left:25px;top:376px">Hisob raqami (R/C)</div>
    <div class="lbl" id="t_bank" style="transform:scaleX(0.888);left:612px;top:376px">Bank</div>
    <div class="ig" style="left:25px;top:398px;width:575px"><div class="ad"><svg class="abs" style="left:8.2px;top:5.6px" width="12.4" height="12.4" viewBox="0 0 24 24"><g fill="#1d2125"><path d="M12 0 L24 5.500 V8 H0 V5.500 Z"/><rect x="2.500" y="9" width="3.300" height="9.500"/><rect x="7.800" y="9" width="3.300" height="9.500"/><rect x="13" y="9" width="3.300" height="9.500"/><rect x="18.200" y="9" width="3.300" height="9.500"/><rect x="1.500" y="18.500" width="21" height="2.200"/><rect x="0" y="21.200" width="24" height="2.800" rx="0.800"/><circle cx="12" cy="5" r="1.300" fill="#f1f4fb"/></g></svg></div></div>
    <div class="ig" style="left:612px;top:398px;width:575px"><div class="ad"><svg class="abs" style="left:8.2px;top:5.6px" width="12.4" height="12.4" viewBox="0 0 24 24"><g fill="#1d2125"><path d="M12 0 L24 5.500 V8 H0 V5.500 Z"/><rect x="2.500" y="9" width="3.300" height="9.500"/><rect x="7.800" y="9" width="3.300" height="9.500"/><rect x="13" y="9" width="3.300" height="9.500"/><rect x="18.200" y="9" width="3.300" height="9.500"/><rect x="1.500" y="18.500" width="21" height="2.200"/><rect x="0" y="21.200" width="24" height="2.800" rx="0.800"/><circle cx="12" cy="5" r="1.300" fill="#f1f4fb"/></g></svg></div></div>
    <div class="lbl" id="t_mfo" style="transform:scaleX(0.900);left:25px;top:441px">MFO</div>
    <div class="lbl" id="t_oked" style="transform:scaleX(0.827);left:612px;top:441px">OKED</div>
    <div class="ig" style="left:25px;top:463px;width:575px"><div class="ad"><svg class="abs" style="left:8.2px;top:5.6px" width="12.4" height="12.4" viewBox="0 0 24 24"><g fill="#1d2125"><path d="M12 0 L24 5.500 V8 H0 V5.500 Z"/><rect x="2.500" y="9" width="3.300" height="9.500"/><rect x="7.800" y="9" width="3.300" height="9.500"/><rect x="13" y="9" width="3.300" height="9.500"/><rect x="18.200" y="9" width="3.300" height="9.500"/><rect x="1.500" y="18.500" width="21" height="2.200"/><rect x="0" y="21.200" width="24" height="2.800" rx="0.800"/><circle cx="12" cy="5" r="1.300" fill="#f1f4fb"/></g></svg></div></div>
    <div class="ig" style="left:612px;top:463px;width:575px"><div class="ad"><svg class="abs" style="left:8.2px;top:5.6px" width="12.4" height="12.4" viewBox="0 0 24 24"><g fill="#1d2125"><path d="M12 0 L24 5.500 V8 H0 V5.500 Z"/><rect x="2.500" y="9" width="3.300" height="9.500"/><rect x="7.800" y="9" width="3.300" height="9.500"/><rect x="13" y="9" width="3.300" height="9.500"/><rect x="18.200" y="9" width="3.300" height="9.500"/><rect x="1.500" y="18.500" width="21" height="2.200"/><rect x="0" y="21.200" width="24" height="2.800" rx="0.800"/><circle cx="12" cy="5" r="1.300" fill="#f1f4fb"/></g></svg></div></div>
  </div>
  <div id="sbar"><div id="sthumb"></div><svg class="abs" style="left:3px;top:5.500px" width="8" height="5" viewBox="0 0 8 5"><path d="M0 5L4 .5L8 5Z" fill="#a3a3a3"/></svg><svg class="abs" style="left:3px;top:458.500px" width="8" height="5" viewBox="0 0 8 5"><path d="M0 0L4 4.500L8 0Z" fill="#505050"/></svg></div>
  <div id="mfoot">
    <div class="btn" style="left:1082px;width:54px;background:#6c757d"><span class="abs" id="t_yop" style="transform:scaleX(.936);left:9px;top:1.500px">Yopish</span></div>
    <div class="btn" style="left:1142px;width:74px;background:#0d6efd"><svg class="abs" style="left:9.2px;top:10.2px" width="11" height="10.4" viewBox="0 0 448 448"><path fill="#fff" fill-rule="evenodd" d="M64 0 C28.700 0 0 28.700 0 64 V384 c0 35.300 28.700 64 64 64 H384 c35.300 0 64-28.700 64-64 V141.300 c0-17-6.700-33.300-18.700-45.300 L352 18.700 C340 6.700 323.700 0 306.700 0 Z M64 96 c0-17.700 14.300-32 32-32 H288 c17.700 0 32 14.300 32 32 v64 c0 17.700-14.300 32-32 32 H96 c-17.700 0-32-14.300-32-32 Z M224 256 a64 64 0 1 1 0 128 a64 64 0 1 1 0-128 Z"/></svg><span class="abs" id="t_saq" style="transform:scaleX(.874);left:23.700px;top:1.500px">Saqlash</span></div>
  </div>
</div>

<!-- ================= TASKBAR ================= -->
<div class="abs" style="left:0;top:681px;width:1280px;height:1px;background:#232425"></div>
<div id="taskbar">
<div class="abs" style="left:0;top:0;width:1280px;height:1.500px;background:#57595b"></div>
<div class="abs" style="left:0;top:1.500px;width:1280px;height:36px;background:linear-gradient(90deg,#0b1114 0%,#0d1416 20%,#14201c 38%,#0e1513 50%,#1a1f22 62%,#1c2226 72%,#171c1f 85%,#14181b 100%)"></div>
<div class="abs" style="left:0;top:1px;width:1280px;height:14px;background:linear-gradient(180deg,rgba(255,255,255,.07),rgba(255,255,255,0))"></div>
<svg class="abs" style="left:7px;top:0.500px" width="37" height="37" viewBox="0 0 37 37"><defs><radialGradient id="orb" cx=".5" cy=".95" r=".9"><stop offset="0" stop-color="#4fe3ff"/><stop offset=".3" stop-color="#1d9ede"/><stop offset=".62" stop-color="#1a5f9e"/><stop offset="1" stop-color="#1d4f88"/></radialGradient><linearGradient id="orbg" x1="0" y1="0" x2="0" y2="1"><stop offset="0" stop-color="#fff" stop-opacity=".55"/><stop offset="1" stop-color="#fff" stop-opacity=".12"/></linearGradient><filter id="fb"><feGaussianBlur stdDeviation=".5"/></filter></defs><circle cx="18.500" cy="18.500" r="17.200" fill="url(#orb)" stroke="#6d93b8" stroke-width=".8"/><path d="M2.600 14A16.500 16.500 0 0 1 34.400 14C28 19.500 9 19.500 2.600 14Z" fill="url(#orbg)"/><g filter="url(#fb)"><path d="M10.800 9.600C13.600 7.800 16.300 8.200 18.300 9.800L16.800 16.800C14.800 15.400 12.100 15.200 9.300 16.600Z" fill="#f26a2b"/><path d="M19.800 10.300C22.200 11.900 25 11.800 27.800 10.400L26.300 17.400C23.400 18.800 20.700 18.700 18.300 17.300Z" fill="#8fc640"/><path d="M8.900 18.100C11.700 16.700 14.500 16.900 16.500 18.300L15 25.400C12.900 24 10.200 23.800 7.300 25.200Z" fill="#49a9ea"/><path d="M18 18.900C20.400 20.300 23.100 20.400 26 19L24.500 26C21.600 27.400 18.800 27.300 16.500 25.900Z" fill="#fcc624"/></g></svg>
<svg class="abs" style="left:68px;top:3px" width="30" height="30" viewBox="0 0 30 30"><path d="M2 1H26L29 4V29H1V2Z" fill="#2344c4" stroke="#0f1f6e" stroke-width="1"/><rect x="9" y="1.500" width="13" height="9" fill="#d7dbe4"/><rect x="16.500" y="2.500" width="4" height="7" fill="#1b2a66"/><rect x="4" y="13.500" width="22" height="15" fill="#fff"/><path d="M5 16.500H25M5 20H25M5 23.500H25M5 27H25" stroke="#e8273c" stroke-width="1.700"/></svg>
<svg class="abs" style="left:127px;top:4px" width="29" height="29" viewBox="0 0 29 29"><radialGradient id="g1c" cx=".45" cy=".3" r=".8"><stop offset="0" stop-color="#fff7b0"/><stop offset=".5" stop-color="#ffd83a"/><stop offset="1" stop-color="#e6a700"/></radialGradient><circle cx="14.500" cy="14.500" r="14" fill="url(#g1c)"/><text x="3.300" y="19.500" font-family="Liberation Sans,sans-serif" font-weight="bold" font-size="14" fill="#e01b1b" letter-spacing="-1.500">1C</text><path d="M17 19.200H26" stroke="#e01b1b" stroke-width="1.600"/></svg>
<svg class="abs" style="left:188px;top:3.500px" width="22" height="29" viewBox="0 0 22 29"><rect x=".5" y=".5" width="21" height="28" rx="2" fill="#8fc3e8" stroke="#4d8fc4"/><rect x="2.500" y="2.500" width="17" height="3" fill="#f0a63a"/><rect x="3" y="7" width="16" height="6.500" fill="#e8f3fb" stroke="#6aa3cf" stroke-width=".7"/><g fill="#e9f2f9"><rect x="3" y="15.500" width="3.300" height="2.600"/><rect x="7.300" y="15.500" width="3.300" height="2.600"/><rect x="11.600" y="15.500" width="3.300" height="2.600"/><rect x="3" y="19.300" width="3.300" height="2.600"/><rect x="7.300" y="19.300" width="3.300" height="2.600"/><rect x="11.600" y="19.300" width="3.300" height="2.600"/><rect x="3" y="23.100" width="3.300" height="2.600"/><rect x="7.300" y="23.100" width="3.300" height="2.600"/><rect x="11.600" y="23.100" width="3.300" height="2.600"/></g><rect x="15.900" y="15.500" width="3.300" height="10.200" fill="#f0a63a"/></svg>
<svg class="abs" style="left:242px;top:5px" width="32" height="28" viewBox="0 0 32 28"><path d="M1 5C1 3.500 2 3 3 3H12L14 5.500H29C30 5.500 31 6 31 7.500V24H1Z" fill="#e9c46a"/><rect x="4" y="1.500" width="4" height="2.500" fill="#3db54a"/><rect x="12.500" y="3" width="4" height="2.500" fill="#e0452c"/><rect x="20" y="4" width="5" height="2.500" fill="#3b8ad9"/><path d="M1 9H31V24H1Z" fill="#f7e3a1"/><path d="M7 16H25L28 27H4Z" fill="#6db7ec"/><path d="M9 18H23L24.500 24H7.500Z" fill="#c4e4fa"/><rect x="6" y="24" width="20" height="3.500" fill="#4e9bd8"/></svg>
<svg class="abs" style="left:301px;top:3.500px" width="29" height="27" viewBox="0 0 29 27"><rect x="13" y="3" width="15" height="21" fill="#fff" stroke="#2b579a" stroke-width=".8"/><path d="M16 7H26M16 10H26M16 13H26M16 16H26M16 19H26M16 22H26" stroke="#2b579a" stroke-width="1.300"/><path d="M0 3L17 0V27L0 24Z" fill="#2b579a"/><text x="2.600" y="19" font-family="Liberation Sans,sans-serif" font-weight="bold" font-size="13" fill="#fff">W</text></svg>
<div class="abs" style="left:346.0px;top:1px;width:54.0px;height:38px;border:1px solid rgba(190,190,190,.75);border-radius:3px;background:linear-gradient(125deg,rgba(175,175,175,.62) 0%,rgba(120,120,120,.5) 35%,rgba(60,60,60,.45) 60%,rgba(85,85,85,.5) 100%)"></div>
<svg class="abs" style="left:359.500px;top:3.500px" width="29" height="27" viewBox="0 0 29 27"><rect x="13" y="3" width="15" height="21" fill="#fff" stroke="#217346" stroke-width=".8"/><g fill="#217346"><rect x="18" y="5.500" width="4" height="2.600"/><rect x="23" y="5.500" width="4" height="2.600"/><rect x="18" y="9.500" width="4" height="2.600"/><rect x="23" y="9.500" width="4" height="2.600"/><rect x="18" y="13.500" width="4" height="2.600"/><rect x="23" y="13.500" width="4" height="2.600"/><rect x="18" y="17.500" width="4" height="2.600"/><rect x="23" y="17.500" width="4" height="2.600"/></g><path d="M0 3L17 0V27L0 24Z" fill="#217346"/><text x="4" y="19" font-family="Liberation Sans,sans-serif" font-weight="bold" font-size="14" fill="#fff">X</text></svg>
<div class="abs" style="left:408.5px;top:1px;width:50.0px;height:38px;border:1px solid rgba(225,225,225,.75);border-radius:3px;opacity:.8;background:linear-gradient(180deg,rgba(205,205,205,.8) 0%,rgba(165,165,165,.75) 48%,rgba(120,120,120,.7) 52%,rgba(150,150,150,.72) 100%)"></div>
<div class="abs" style="left:404.5px;top:1px;width:50.0px;height:38px;border:1px solid rgba(225,225,225,.75);border-radius:3px;background:linear-gradient(180deg,rgba(205,205,205,.8) 0%,rgba(165,165,165,.75) 48%,rgba(120,120,120,.7) 52%,rgba(150,150,150,.72) 100%)"></div>
<svg class="abs" style="left:414.500px;top:4px" width="30" height="30" viewBox="0 0 30 30"><circle cx="15" cy="15" r="14" fill="#fff"/><path d="M15 15L2.900 8A14 14 0 0 1 27.100 8Z" fill="#e33b2e"/><path d="M15 15L27.100 8A14 14 0 0 1 15 29Z" fill="#fcc31d"/><path d="M15 15L15 29A14 14 0 0 1 2.900 8Z" fill="#2da94f"/><circle cx="15" cy="15" r="6.400" fill="#fff"/><circle cx="15" cy="15" r="5" fill="#4a8af4"/><circle cx="22.300" cy="21.600" r="7" fill="#2d6cf0"/><path d="M24.500 17.500L22.800 22.300L26.500 24.500L22 23.500L18.500 24.500L21 22.500Z" fill="#f26b4e"/></svg>
<svg class="abs" style="left:476.7px;top:4.9px" width="27.0" height="27.0" viewBox="0 0 28 28"><circle cx="14" cy="14" r="14" fill="#2ea6de"/><path d="M5.500 13.600L21.200 7.500C21.900 7.200 22.600 7.700 22.300 8.800L19.700 21C19.500 21.900 18.900 22.100 18.200 21.700L14.200 18.800L12.300 20.700C12.100 20.900 11.900 21 11.600 21L11.900 16.900L19.200 10.300C19.500 10 19.100 9.900 18.700 10.200L9.700 15.900L5.800 14.700C5 14.400 5 13.900 5.500 13.600Z" fill="#fff"/></svg>
<div class="abs" style="left:520.5px;top:1px;width:54.0px;height:38px;border:1px solid rgba(190,190,190,.75);border-radius:3px;background:linear-gradient(125deg,rgba(175,175,175,.62) 0%,rgba(120,120,120,.5) 35%,rgba(60,60,60,.45) 60%,rgba(85,85,85,.5) 100%)"></div>
<svg class="abs" style="left:534px;top:7px" width="28" height="22" viewBox="0 0 28 22"><path d="M7 19C3.500 19 1.500 16.800 1.500 14.200C1.500 11.800 3.200 10 5.600 9.700C6 5.500 9.200 2.500 13.300 2.500C16.800 2.500 19.600 4.600 20.600 7.700C24 7.900 26.500 10.300 26.500 13.400C26.500 16.600 24 19 20.800 19" fill="none" stroke="#2f6fe0" stroke-width="1.700"/><text x="8.500" y="20.500" font-family="Liberation Sans,sans-serif" font-weight="bold" font-size="6.500" fill="#2f6fe0">ATC</text></svg>
<div class="abs" style="left:579.0px;top:1px;width:54.0px;height:38px;border:1px solid rgba(190,190,190,.75);border-radius:3px;background:linear-gradient(125deg,rgba(175,175,175,.62) 0%,rgba(120,120,120,.5) 35%,rgba(60,60,60,.45) 60%,rgba(85,85,85,.5) 100%)"></div>
<svg class="abs" style="left:592.9px;top:4.9px" width="27.0" height="27.0" viewBox="0 0 28 28"><circle cx="14" cy="14" r="14" fill="#2ea6de"/><path d="M5.500 13.600L21.200 7.500C21.900 7.200 22.600 7.700 22.300 8.800L19.700 21C19.500 21.900 18.900 22.100 18.200 21.700L14.200 18.800L12.300 20.700C12.100 20.900 11.900 21 11.600 21L11.900 16.900L19.200 10.300C19.500 10 19.100 9.900 18.700 10.200L9.700 15.900L5.800 14.700C5 14.400 5 13.900 5.500 13.600Z" fill="#fff"/></svg>
<div class="abs" id="t_en" style="transform:scaleX(0.801);left:1010px;top:9px;font-size:11.5px;line-height:14px;color:#fff;transform-origin:0 50%">EN</div>
<svg class="abs" style="left:1038.500px;top:10px" width="16" height="16" viewBox="0 0 16 16"><circle cx="6.500" cy="8.500" r="6.500" fill="#3fae49"/><circle cx="9" cy="7.500" r="6.500" fill="#e52d27"/><path d="M9 3.500V8.500" stroke="#fff" stroke-width="1.800"/><circle cx="9" cy="11" r="1.100" fill="#fff"/></svg>
<svg class="abs" style="left:1060px;top:9px" width="18" height="18" viewBox="0 0 18 18"><path d="M3 2V16" stroke="#e8e8e8" stroke-width="1.500"/><path d="M4 3C6.500 1.500 8.500 4.500 12 3V9.500C8.500 11 6.500 8 4 9.500Z" fill="#f2f2f2"/><circle cx="12" cy="12.500" r="4.600" fill="#e02a2a"/><path d="M10 10.500L14 14.500M14 10.500L10 14.500" stroke="#fff" stroke-width="1.500"/></svg>
<svg class="abs" style="left:1082px;top:9px" width="16" height="18" viewBox="0 0 16 18"><rect x="1.500" y="4" width="8.500" height="12.500" rx="1" fill="none" stroke="#f2f2f2" stroke-width="1.500"/><rect x="3.500" y="2" width="4.500" height="2" fill="#f2f2f2"/><path d="M9 6H14.500V10C14.500 12 13 13 11.800 13V16" fill="#f2f2f2" stroke="#f2f2f2" stroke-width="1"/><path d="M10.500 3V6M13 3V6" stroke="#f2f2f2" stroke-width="1.300"/></svg>
<svg class="abs" style="left:1106.500px;top:13px" width="14" height="11" viewBox="0 0 14 11"><g fill="#f4f4f4"><rect x="0" y="8.500" width="2" height="2.500"/><rect x="3" y="6.500" width="2" height="4.500"/><rect x="6" y="4.500" width="2" height="6.500"/><rect x="9" y="2.500" width="2" height="8.500"/><rect x="12" y=".3" width="2" height="10.700"/></g></svg>
<svg class="abs" style="left:1128px;top:10px" width="16" height="16" viewBox="0 0 16 16"><path d="M1 5.500H4L8 1.500V14.500L4 10.500H1Z" fill="#f4f4f4"/><path d="M10 5.500C11 6.800 11 9.200 10 10.500M12 3.500C14 6 14 10 12 12.500" stroke="#e0e0e0" stroke-width="1.200" fill="none"/></svg>
<svg class="abs" style="left:1151.500px;top:9px" width="13" height="18" viewBox="0 0 13 18"><ellipse cx="6.500" cy="9" rx="6.300" ry="8.800" fill="#153a8a"/><path d="M3 5.500L9.500 11.800L6.500 14.800V3.200L9.500 6.200L3 12.500" stroke="#fff" stroke-width="1.300" fill="none"/></svg>
<svg class="abs" style="left:1172.6px;top:10.3px" width="15.4" height="15.4" viewBox="0 0 28 28"><circle cx="14" cy="14" r="14" fill="#2ea6de"/><path d="M5.500 13.600L21.200 7.500C21.900 7.200 22.600 7.700 22.300 8.800L19.700 21C19.500 21.900 18.900 22.100 18.200 21.700L14.200 18.800L12.300 20.700C12.100 20.900 11.900 21 11.600 21L11.900 16.900L19.200 10.300C19.500 10 19.100 9.900 18.700 10.200L9.700 15.900L5.800 14.700C5 14.400 5 13.900 5.500 13.600Z" fill="#fff"/></svg>
<div class="abs" id="t_time" style="transform:scaleX(0.862);left:1220.500px;top:4.500px;font-size:11.5px;line-height:14px;color:#fff;white-space:nowrap;transform-origin:0 50%">8:12</div>
<div class="abs" id="t_date" style="transform:scaleX(0.872);left:1204.800px;top:20px;font-size:11.5px;line-height:14px;color:#fff;white-space:nowrap;transform-origin:0 50%">07.01.2026</div>
<div class="abs" style="left:1267px;top:1px;width:14px;height:38px;border:1px solid rgba(160,160,160,.7);border-radius:2px;background:linear-gradient(135deg,rgba(190,190,190,.45),rgba(60,60,60,.4) 50%,rgba(20,20,20,.5))"></div>
</div>

</body>
</html>
